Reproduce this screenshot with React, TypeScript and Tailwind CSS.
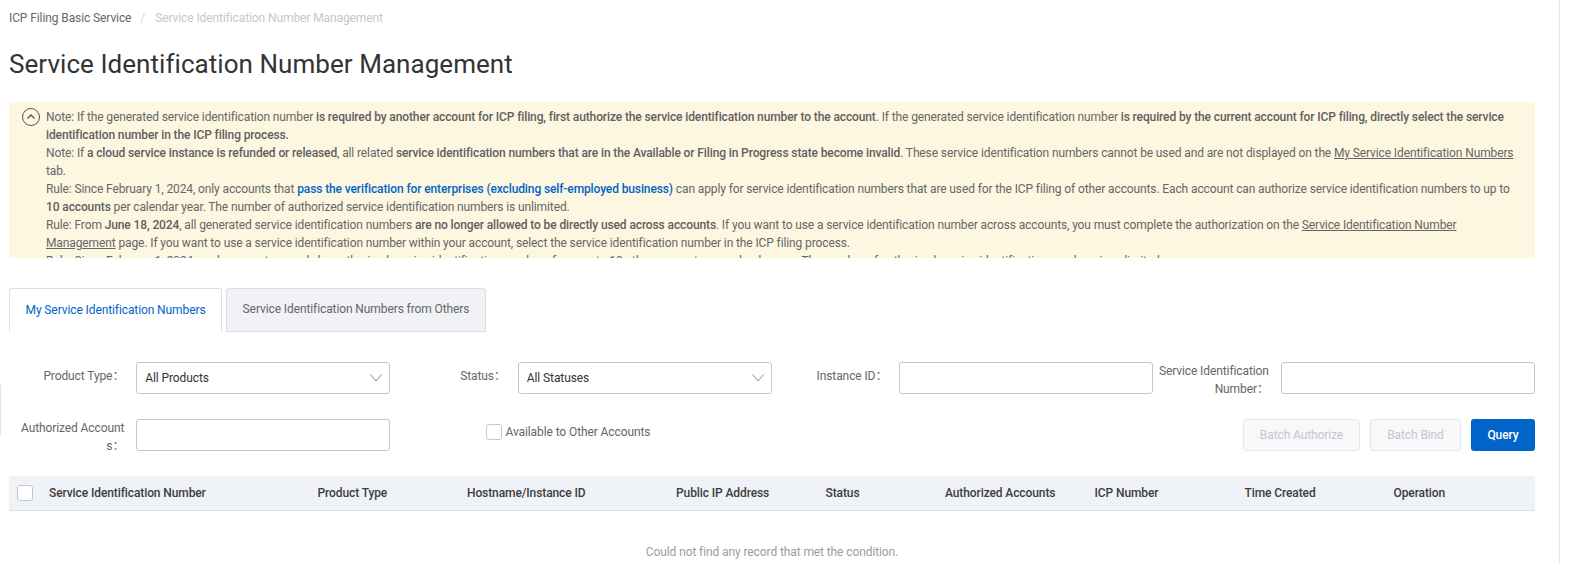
import React from "react";

const columns = [
  { label: "Service Identification Number", width: "w-[268.5px]" },
  { label: "Product Type", width: "w-[149.5px]" },
  { label: "Hostname/Instance ID", width: "w-[209px]" },
  { label: "Public IP Address", width: "w-[149.5px]" },
  { label: "Status", width: "w-[119.5px]" },
  { label: "Authorized Accounts", width: "w-[149.5px]" },
  { label: "ICP Number", width: "w-[150px]" },
  { label: "Time Created", width: "w-[149px]" },
  { label: "Operation", width: "flex-1" },
];

const FieldLabel = ({ children, wrapped }: { children: React.ReactNode; wrapped?: boolean }) => (
  <label className={`w-[127.3px] shrink-0 pr-3 text-right text-[12px] leading-[18px] text-[#666666] ${wrapped ? "" : "pt-[5px]"}`}>
    {children}
  </label>
);

const SelectBox = ({ value }: { value: string }) => (
  <div className="flex h-8 w-[254px] shrink-0 items-center justify-between rounded-[3px] border border-[#c4c6cf] bg-white pl-2 pr-[6px] text-[12px] text-[#333333]">
    <span>{value}</span>
    <svg width="14" height="14" viewBox="0 0 14 14" fill="none" stroke="#8a8a8f" strokeWidth="1">
      <path d="M1.5 3.5 L7 10 L12.5 3.5" />
    </svg>
  </div>
);

const TextBox = () => (
  <input className="h-8 w-[254px] shrink-0 rounded-[3px] border border-[#c4c6cf] bg-white" />
);

const CheckBox = () => (
  <span className="block h-4 w-4 shrink-0 rounded-[3px] border border-[#c4c6cf] bg-white" />
);

export default function App() {
  return (
    <div className="relative h-[564px] w-[1571px] overflow-hidden bg-white font-['Roboto','Noto_Sans_CJK_SC',sans-serif] text-[12px] tracking-[-0.1px]">
      <div className="absolute left-0 top-[385px] h-[50px] w-px bg-[#e3e4e8]" />
      <div className="absolute right-0 top-0 h-full w-3 border-l border-[#e6e7eb]" />

      <div className="ml-[9px] w-[1526px]">
        <div className="flex h-9 items-center text-[12px]">
          <span className="text-[#666666]">ICP Filing Basic Service</span>
          <span className="ml-[9px] mr-[10px] text-[#d4d5d9]">/</span>
          <span className="text-[#c4c6cf]">Service Identification Number Management</span>
        </div>

        <h1 className="mt-[10px] text-[26px] font-normal leading-9 tracking-[0.05px] text-[#333333]">
          Service Identification Number Management
        </h1>

        <div className="mt-5 flex h-[156px] overflow-hidden bg-[#fdf6e0] pl-[13px] pr-[17px] pt-[6px] leading-[18px] tracking-[-0.115px] text-[#666666]">
          <svg className="mr-[6px] shrink-0" width="18" height="18" viewBox="0 0 18 18" fill="none" stroke="#555555">
            <circle cx="9" cy="9" r="8.5" strokeWidth="1" />
            <path d="M5.5 10.5 L9 7 L12.5 10.5" strokeWidth="1.4" />
          </svg>
          <div className="min-w-0 flex-1">
            <p>
              Note: If the generated service identification number <b className="font-medium text-[#606060]">is required by another account for ICP filing, first authorize the service identification number to the account</b>. If the generated service identification number <b className="font-medium text-[#606060]">is required by the current account for ICP filing, directly select the service identification number in the ICP filing process.</b>
            </p>
            <p>
              Note: If <b className="font-medium text-[#606060]">a cloud service instance is refunded or released</b>, all related <b className="font-medium text-[#606060]">service identification numbers that are in the Available or Filing in Progress state become invalid</b>. These service identification numbers cannot be used and are not displayed on the <u>My Service Identification Numbers</u> tab.
            </p>
            <p>
              Rule: Since February 1, 2024, only accounts that <b className="font-medium text-[#0064c8]">pass the verification for enterprises (excluding self-employed business)</b> can apply for service identification numbers that are used for the ICP filing of other accounts. Each account can authorize service identification numbers to up to <b className="font-medium text-[#606060]">10 accounts</b> per calendar year. The number of authorized service identification numbers is unlimited.
            </p>
            <p>
              Rule: From <b className="font-medium text-[#606060]">June 18, 2024</b>, all generated service identification numbers <b className="font-medium text-[#606060]">are no longer allowed to be directly used across accounts</b>. If you want to use a service identification number across accounts, you must complete the authorization on the <u>Service Identification Number Management</u> page. If you want to use a service identification number within your account, select the service identification number in the ICP filing process.
            </p>
            <p>
              Rule: Since February 1, 2024, each account can only be authorized service identification numbers from up to 10 other accounts per calendar year. The number of authorized service identification numbers is unlimited.
            </p>
          </div>
        </div>

        <div className="mt-[30px] flex h-11 gap-1">
          <div className="flex w-[213px] items-center justify-center rounded-t-[3px] border border-b-0 border-[#dcdee3] bg-white pb-[2px] text-[#0064c8]">
            My Service Identification Numbers
          </div>
          <div className="flex w-[260px] items-center justify-center rounded-t-[3px] border border-[#dcdee3] bg-[#f0f2f6] pb-[2px] text-[#666666]">
            Service Identification Numbers from Others
          </div>
        </div>

        <div className="mt-[30px] grid grid-cols-4 items-start">
          <div className="flex">
            <FieldLabel>Product Type：</FieldLabel>
            <SelectBox value="All Products" />
          </div>
          <div className="flex">
            <FieldLabel>Status：</FieldLabel>
            <SelectBox value="All Statuses" />
          </div>
          <div className="flex">
            <FieldLabel>Instance ID：</FieldLabel>
            <TextBox />
          </div>
          <div className="flex">
            <FieldLabel wrapped>
              Service Identification
              <br />
              Number：
            </FieldLabel>
            <TextBox />
          </div>
        </div>

        <div className="mt-[21px] flex items-start">
          <div className="flex w-[381.5px] shrink-0">
            <FieldLabel wrapped>
              Authorized Account
              <br />
              s：
            </FieldLabel>
            <TextBox />
          </div>
          <div className="ml-[95px] flex h-[26px] items-center gap-1 text-[#666666]">
            <CheckBox />
            <span>Available to Other Accounts</span>
          </div>
          <div className="ml-auto flex gap-[10px]">
            <button className="h-8 w-[117px] rounded-[3px] border border-[#e6e7eb] bg-[#f7f8fa] text-[#c4c6cf]">Batch Authorize</button>
            <button className="h-8 w-[91px] rounded-[3px] border border-[#e6e7eb] bg-[#f7f8fa] text-[#c4c6cf]">Batch Bind</button>
            <button className="h-8 w-[64px] rounded-[3px] bg-[#0064c8] font-medium text-white">Query</button>
          </div>
        </div>

        <div className="mt-[21px] flex h-[35px] items-center border-b border-[#dcdee3] bg-[#eff2f7] pl-2 font-medium text-[#3d3d3d]">
          <div className="w-8 shrink-0">
            <CheckBox />
          </div>
          {columns.map((c) => (
            <div key={c.label} className={`${c.width} shrink-0`}>
              {c.label}
            </div>
          ))}
        </div>

        <div className="mt-8 text-center text-[#9a9ca3]">Could not find any record that met the condition.</div>
      </div>
    </div>
  );
}
